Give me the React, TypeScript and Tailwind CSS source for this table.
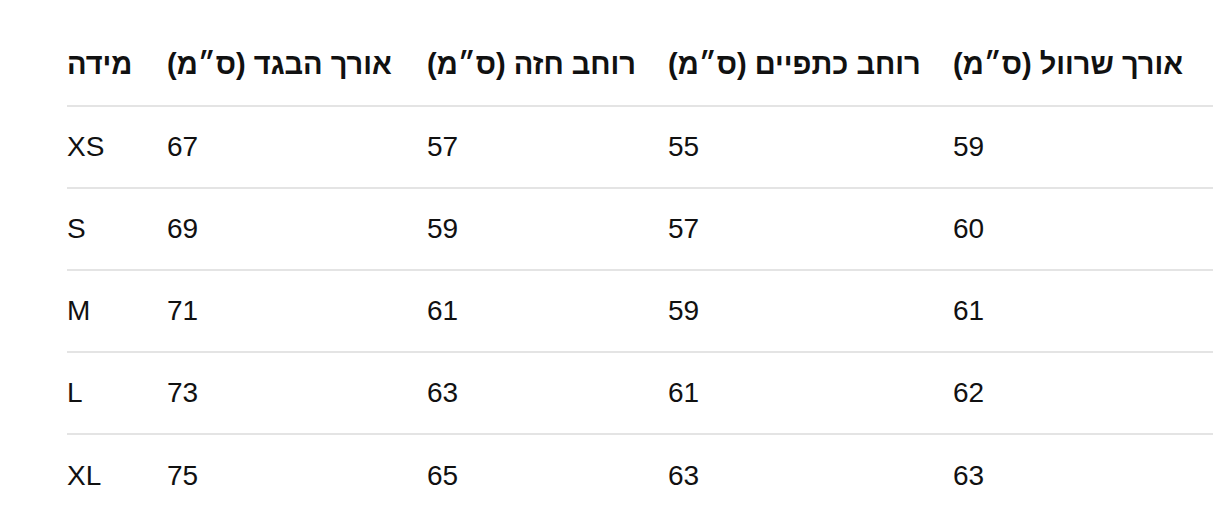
import React from "react";

const headers = ["מידה", "אורך הבגד (ס״מ)", "רוחב חזה (ס״מ)", "רוחב כתפיים (ס״מ)", "אורך שרוול (ס״מ)"];
const rows = [
  ["XS", "67", "57", "55", "59"],
  ["S", "69", "59", "57", "60"],
  ["M", "71", "61", "59", "61"],
  ["L", "73", "63", "61", "62"],
  ["XL", "75", "65", "63", "63"],
];

const grid = "grid grid-cols-[100px_260px_241px_285px_1fr] items-center";

export default function App() {
  return (
    <div
      className="w-[1213px] h-[524px] overflow-hidden bg-white text-[#111111] pt-[25px] pl-[67px]"
      style={{ fontFamily: '"Liberation Sans", Arial, sans-serif' }}
    >
      <div className={`${grid} h-[82px] border-b-2 border-[#e4e4e4] font-bold text-[29px]`}>
        {headers.map((h, i) => (
          <div key={i} className="whitespace-nowrap">
            <span dir="rtl">{h}</span>
          </div>
        ))}
      </div>
      {rows.map((r, ri) => (
        <div
          key={ri}
          className={`${grid} h-[82px] text-[28px] ${ri < rows.length - 1 ? "border-b-2 border-[#e4e4e4]" : ""}`}
        >
          {r.map((c, ci) => (
            <div key={ci}>{c}</div>
          ))}
        </div>
      ))}
    </div>
  );
}
